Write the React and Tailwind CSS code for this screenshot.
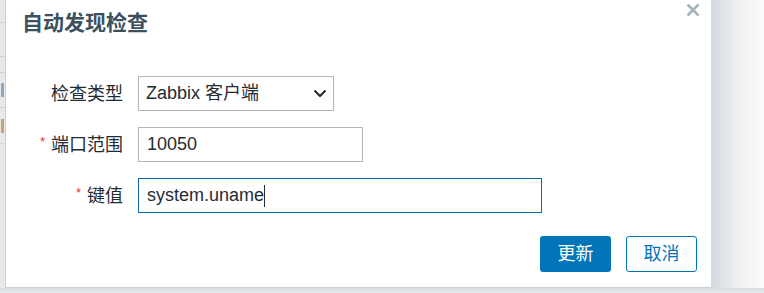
import React from "react";

const font = { fontFamily: '"Liberation Sans", "Noto Sans CJK SC", sans-serif' };

function Row({ label, required, children, starGap }) {
  return (
    <div className="flex items-center h-[35px]">
      <div className="w-[117px] flex items-center justify-end text-[18px] text-[#1f2c33] leading-none">
        {required && <span className="text-[#e33734] text-[13px] mr-[6px] -mt-[6px]">*</span>}
        <span>{label}</span>
      </div>
      <div className="ml-[15px]">{children}</div>
    </div>
  );
}

export default function App() {
  return (
    <div className="w-[764px] h-[293px] overflow-hidden flex flex-col bg-[#dfe3e6]" style={font}>
      <div className="flex h-[288px]">
        {/* left background strip */}
        <div className="w-[5px] bg-[#e7eaed] flex flex-col relative">
          <div className="h-[23px] border-b border-[#c9d0d6]" />
          <div className="h-[34px] border-b border-[#c9d0d6]" />
          <div className="h-[16px] border-b border-[#c9d0d6]" />
          <div className="h-[35px] border-b border-[#c9d0d6] flex items-center">
            <div className="w-[3px] h-[14px] bg-[#9aa5ad] ml-[1px]" />
          </div>
          <div className="h-[36px] border-b border-[#d3d9de] flex items-center">
            <div className="w-[3px] h-[14px] bg-[#c9a66a] ml-[1px]" />
          </div>
          <div className="flex-1" />
        </div>
        {/* dialog */}
        <div className="w-[706px] bg-white border-l border-b border-[#c8cfd5] flex flex-col relative">
          <div className="flex justify-between items-start">
            <div className="pl-[16px] pt-[9px] text-[21px] font-bold text-[#3d505d] leading-[28px]">自动发现检查</div>
            <svg className="mt-[3px] mr-[11px]" width="14" height="14" viewBox="0 0 14 14">
              <path d="M1.5 1.5 L12.5 12.5 M12.5 1.5 L1.5 12.5" stroke="#a8b3bb" strokeWidth="2.6" strokeLinecap="butt" />
            </svg>
          </div>
          <div className="mt-[39px] flex flex-col gap-[16px]">
            <Row label="检查类型">
              <div className="w-[196px] h-[35px] border border-[#aeb8bf] flex items-center justify-between pl-[7px] pr-[6px] text-[18px] text-[#1f2c33]">
                <span>Zabbix 客户端</span>
                <svg width="14" height="9" viewBox="0 0 14 9">
                  <path d="M1.5 1.5 L7 7 L12.5 1.5" fill="none" stroke="#1f2c33" strokeWidth="2" />
                </svg>
              </div>
            </Row>
            <Row label="端口范围" required>
              <div className="w-[225px] h-[35px] border border-[#aeb8bf] flex items-center pl-[8px] text-[18px] text-[#1f2c33]">10050</div>
            </Row>
            <Row label="键值" required>
              <div className="w-[404px] h-[35px] border border-[#0b6aa5] flex items-center pl-[8px] text-[18px] text-[#1f2c33]">
                <span>system.uname</span>
                <span className="w-[1px] h-[22px] bg-[#1f2c33]" />
              </div>
            </Row>
          </div>
          <div className="mt-[23px] flex justify-end gap-[15px] pr-[14px]">
            <div className="w-[71px] h-[36px] rounded-[3px] bg-[#0275b8] text-white text-[18px] flex items-center justify-center">更新</div>
            <div className="w-[71px] h-[36px] rounded-[3px] border border-[#0275b8] bg-white text-[#0275b8] text-[18px] flex items-center justify-center">取消</div>
          </div>
        </div>
        {/* right shadow */}
        <div className="flex-1 bg-linear-to-r from-[#d4d9de] via-[#eef0f2] to-[#fbfbfc]" />
      </div>
      <div className="flex-1 bg-linear-to-b from-[#d8dde1] to-[#e6e9ec]" />
    </div>
  );
}
